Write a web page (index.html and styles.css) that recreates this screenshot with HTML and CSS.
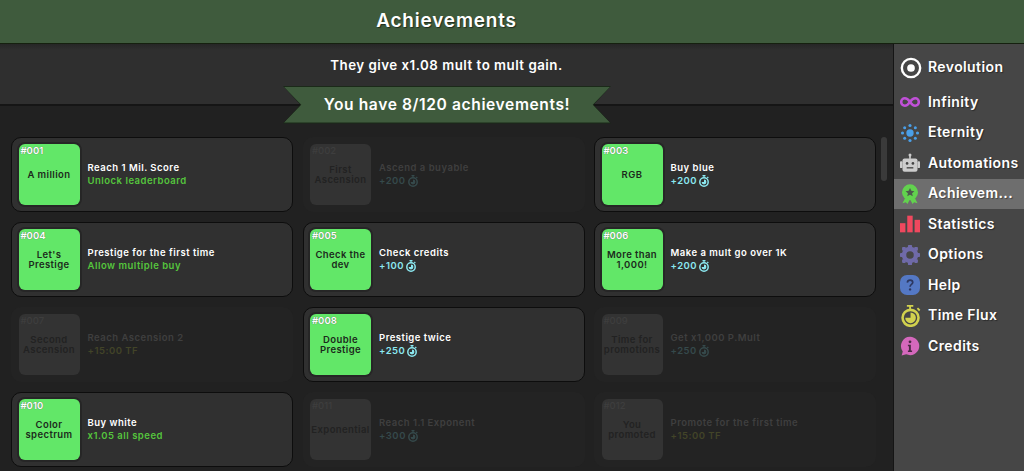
FILE: index.html
```html
<!DOCTYPE html>
<html lang="en">
<head>
<meta charset="utf-8">
<title>Achievements</title>
<link rel="stylesheet" href="styles.css">
</head>
<body>
<svg class="defs" width="0" height="0" aria-hidden="true">
  <symbol id="flux" viewBox="0 0 12 12">
    <path d="M4.500 .7h3M6 .7v2M9.300 2l1 1" fill="none" stroke="currentColor" stroke-width="1.200"/>
    <circle cx="6" cy="7" r="4.200" fill="none" stroke="currentColor" stroke-width="1.500"/>
    <path d="M6 7V4.600A2.400 2.400 0 1 1 3.600 7z" fill="currentColor"/>
  </symbol>
</svg>
<header class="topbar"><h1>Achievements</h1></header>
<div class="layout">
  <main class="main">
    <div class="info">They give x1.08 mult to mult gain.</div>
    <div class="ribbon"><span class="ribbon-fill">You have 8/120 achievements!</span></div>
    <div class="list">
      <div class="scroll"></div>
      <section class="grid">
        <article class="card"><div class="badge"><span class="num">#001</span>A million</div><div class="desc"><p>Reach 1 Mil. Score</p><p class="green">Unlock leaderboard</p></div></article>
        <article class="card locked"><div class="badge"><span class="num">#002</span>First Ascension</div><div class="desc"><p>Ascend a buyable</p><p class="cyan">+200<svg class="fx"><use href="#flux"/></svg></p></div></article>
        <article class="card"><div class="badge"><span class="num">#003</span>RGB</div><div class="desc"><p>Buy blue</p><p class="cyan">+200<svg class="fx"><use href="#flux"/></svg></p></div></article>
        <article class="card"><div class="badge"><span class="num">#004</span>Let's Prestige</div><div class="desc"><p>Prestige for the first time</p><p class="green">Allow multiple buy</p></div></article>
        <article class="card"><div class="badge"><span class="num">#005</span>Check the dev</div><div class="desc"><p>Check credits</p><p class="cyan">+100<svg class="fx"><use href="#flux"/></svg></p></div></article>
        <article class="card"><div class="badge"><span class="num">#006</span>More than 1,000!</div><div class="desc"><p>Make a mult go over 1K</p><p class="cyan">+200<svg class="fx"><use href="#flux"/></svg></p></div></article>
        <article class="card locked"><div class="badge"><span class="num">#007</span>Second Ascension</div><div class="desc"><p>Reach Ascension 2</p><p class="yellow">+15:00 TF</p></div></article>
        <article class="card"><div class="badge"><span class="num">#008</span>Double Prestige</div><div class="desc"><p>Prestige twice</p><p class="cyan">+250<svg class="fx"><use href="#flux"/></svg></p></div></article>
        <article class="card locked"><div class="badge"><span class="num">#009</span>Time for promotions</div><div class="desc"><p>Get x1,000 P.Mult</p><p class="cyan">+250<svg class="fx"><use href="#flux"/></svg></p></div></article>
        <article class="card"><div class="badge"><span class="num">#010</span>Color spectrum</div><div class="desc"><p>Buy white</p><p class="green">x1.05 all speed</p></div></article>
        <article class="card locked"><div class="badge"><span class="num">#011</span>Exponential</div><div class="desc"><p>Reach 1.1 Exponent</p><p class="cyan">+300<svg class="fx"><use href="#flux"/></svg></p></div></article>
        <article class="card locked"><div class="badge"><span class="num">#012</span>You promoted</div><div class="desc"><p>Promote for the first time</p><p class="yellow">+15:00 TF</p></div></article>
      </section>
    </div>
  </main>
  <nav class="side">
    <a class="item first"><svg class="ico big" viewBox="0 0 24 24"><circle cx="12" cy="12" r="10" fill="none" stroke="#fff" stroke-width="2.600"/><circle cx="12" cy="12" r="4.200" fill="#fff"/></svg><span>Revolution</span></a>
    <a class="item"><svg class="ico" viewBox="0 0 24 24"><path d="M12 12C9.500 8.500 7.800 7.600 5.800 7.600a4.400 4.400 0 0 0 0 8.800c2 0 3.700-.9 6.200-4.400s4.200-4.400 6.200-4.400a4.400 4.400 0 0 1 0 8.800c-2 0-3.700-.9-6.200-4.400z" fill="none" stroke="#c050d8" stroke-width="3"/></svg><span>Infinity</span></a>
    <a class="item"><svg class="ico" viewBox="0 0 24 24" fill="#4a9fe8"><circle cx="12" cy="12" r="4.400"/><circle cx="12" cy="3" r="1.900"/><circle cx="12" cy="21" r="1.900"/><circle cx="3" cy="12" r="1.900"/><circle cx="21" cy="12" r="1.900"/><circle cx="5.600" cy="5.600" r="1.800"/><circle cx="18.400" cy="5.600" r="1.800"/><circle cx="5.600" cy="18.400" r="1.800"/><circle cx="18.400" cy="18.400" r="1.800"/></svg><span>Eternity</span></a>
    <a class="item"><svg class="ico" viewBox="0 0 24 24"><circle cx="12" cy="2.500" r="1.800" fill="#ccc"/><rect x="11" y="3" width="2" height="4" fill="#ccc"/><rect x="0" y="10" width="3" height="8" rx="1" fill="#ccc"/><rect x="21" y="10" width="3" height="8" rx="1" fill="#ccc"/><rect x="3" y="6.500" width="18" height="16" rx="2.500" fill="#ccc"/><circle cx="8.500" cy="12.500" r="1.600" fill="#444"/><circle cx="15.500" cy="12.500" r="1.600" fill="#444"/><rect x="8" y="17" width="8" height="1.600" fill="#444"/></svg><span>Automations</span></a>
    <a class="item active"><svg class="ico" viewBox="0 0 24 24"><path d="M6 17l-3 6 4-1 2 2 3-6zM18 17l3 6-4-1-2 2-3-6z" fill="#62d24e"/><circle cx="12" cy="10" r="9.600" fill="#62d24e"/><path d="M12 4.800l1.600 3.400 3.700.4-2.800 2.500.8 3.700-3.300-1.900-3.300 1.900.8-3.700-2.800-2.500 3.700-.4z" fill="#4c5a4c"/></svg><span>Achievem...</span></a>
    <a class="item"><svg class="ico" viewBox="0 0 24 24" fill="#f0485e"><rect x="0" y="11" width="6.500" height="11"/><rect x="8.700" y="2" width="6.500" height="20"/><rect x="17.500" y="7" width="6.500" height="15"/></svg><span>Statistics</span></a>
    <a class="item"><svg class="ico" viewBox="0 0 24 24"><circle cx="12" cy="12" r="7.200" fill="none" stroke="#6f6aa8" stroke-width="5.400"/><g fill="#6f6aa8"><rect x="9.500" y="0" width="5" height="4" rx="1"/><rect x="9.500" y="20" width="5" height="4" rx="1"/><rect x="0" y="9.500" width="4" height="5" rx="1"/><rect x="20" y="9.500" width="4" height="5" rx="1"/><rect x="2.500" y="2.500" width="4.500" height="4.500" rx="1"/><rect x="17" y="2.500" width="4.500" height="4.500" rx="1"/><rect x="2.500" y="17" width="4.500" height="4.500" rx="1"/><rect x="17" y="17" width="4.500" height="4.500" rx="1"/></g></svg><span>Options</span></a>
    <a class="item"><svg class="ico" viewBox="0 0 24 24"><rect x="0" y="0" width="24" height="24" rx="8.500" fill="#5478c4"/><path d="M8.800 9.200c.2-2 1.600-3 3.300-3s3.200 1 3.200 2.800c0 2.300-3.200 2.400-3.200 5" fill="none" stroke="#2c3760" stroke-width="2"/><circle cx="12.100" cy="17.300" r="1.400" fill="#2c3760"/></svg><span>Help</span></a>
    <a class="item"><svg class="ico big" viewBox="0 0 24 24"><path d="M7.500 1h7M11 1v4M19 3.500l2.500 2.500" fill="none" stroke="#d2d24e" stroke-width="2"/><circle cx="11.500" cy="14" r="8.700" fill="none" stroke="#d2d24e" stroke-width="2.800"/><path d="M11.500 14V8.200a5.800 5.800 0 1 1-5.800 5.800z" fill="#d2d24e"/></svg><span>Time Flux</span></a>
    <a class="item"><svg class="ico" viewBox="0 0 24 24"><path d="M12 1a11 11 0 1 1-4.500 21L2 23.500l1.300-5A11 11 0 0 1 12 1z" fill="#d468bc"/><circle cx="12" cy="7" r="1.700" fill="#4a2a44"/><path d="M9.500 10.500h3.500v7h1.500v1.800h-5v-1.800h1.200v-5.200h-1.200z" fill="#4a2a44"/></svg><span>Credits</span></a>
  </nav>
</div>
</body>
</html>
```
FILE: styles.css
```css
* { box-sizing: border-box; margin: 0; padding: 0; }
html, body { height: 100%; overflow: hidden; }
body {
  display: flex;
  flex-direction: column;
  background: #212121;
  color: #fff;
  font-family: "Inter", "DejaVu Sans", sans-serif;
}
.defs { position: absolute; }
.topbar {
  flex: none;
  height: 44px;
  background: #3f5b3d;
  border-bottom: 1px solid #15200f;
  display: flex;
  align-items: center;
  justify-content: center;
  padding-right: 131px;
}
.topbar h1 { font-size: 19px; font-weight: 600; letter-spacing: .8px; margin-top: -2px; text-shadow: 1px 1px 1px rgba(0,0,0,.5); }
.layout { flex: 1; display: flex; min-height: 0; }
.main { flex: 1; min-width: 0; position: relative; display: flex; flex-direction: column; }
.info {
  flex: none;
  height: 62px;
  background: linear-gradient(#262626 0, #2f2f2f 6px);
  border-bottom: 2px solid #151515;
  text-align: center;
  padding-top: 13px;
  font-size: 13.300px;
  font-weight: 600;
  letter-spacing: .5px;
}
.ribbon {
  position: absolute;
  left: 283px;
  top: 42px;
  width: 328px;
  height: 37.500px;
  background: #1b2a19;
  clip-path: polygon(0 0, 100% 0, 94.700% 50%, 100% 100%, 0 100%, 5.300% 50%);
  padding: 1px;
}
.ribbon-fill {
  display: flex;
  align-items: center;
  justify-content: center;
  height: 100%;
  padding-bottom: 1px;
  background: #3f5b3d;
  clip-path: polygon(0 0, 100% 0, 94.700% 50%, 100% 100%, 0 100%, 5.300% 50%);
  font-size: 15.600px;
  font-weight: 600;
  letter-spacing: .6px;
}
.list { flex: 1; min-height: 0; display: flex; flex-direction: row-reverse; padding: 31px 6px 0 11px; gap: 5px; overflow: hidden; }
.scroll { flex: none; width: 6px; height: 44px; background: #3a3a3a; border-radius: 3px; }
.grid { flex: 1; min-width: 0; display: grid; grid-template-columns: repeat(3, 282px); grid-auto-rows: 75px; column-gap: 9.500px; row-gap: 10px; align-content: start; }
.card {
  display: flex;
  align-items: center;
  gap: 8px;
  padding: 0 6.500px;
  background: #303030;
  border: 1.500px solid #0d0d0d;
  border-radius: 10px;
  font-size: 9.500px;
  font-weight: 600;
  letter-spacing: .5px;
}
.badge {
  position: relative;
  flex: none;
  width: 61px;
  height: 61px;
  display: flex;
  align-items: center;
  justify-content: center;
  text-align: center;
  padding: 0 1px;
  line-height: 10px;
  letter-spacing: .4px;
  background: #62e768;
  box-shadow: 0 0 0 2px #262626;
  border-radius: 6px;
  color: #1c2a1c;
}
.num { position: absolute; left: 2px; top: 1px; font-size: 9.500px; font-weight: 600; letter-spacing: 0; color: #fff; line-height: 12px; text-shadow: 0 0 1px #555; }
.desc { display: flex; flex-direction: column; gap: 2px; line-height: 11px; margin-top: -1px; }
.green { color: #55c53d; }
.cyan { color: #8be8f0; display: flex; align-items: center; }
.yellow { color: #d0d060; }
.fx { width: 12px; height: 12px; margin: -.5px 0 -.5px 1px; }
.locked { border-color: transparent; background: #232323; color: #3f3f3f; }
.locked .badge { background: #333; box-shadow: none; color: #222; }
.locked .num { color: #3e3e3e; font-weight: 500; text-shadow: none; }
.locked .green { color: #36452f; }
.locked .cyan { color: #35494b; }
.locked .yellow { color: #424428; }
.side {
  flex: none;
  width: 131px;
  background: #464646;
  border-left: 1px solid #151515;
  padding-top: 8px;
  display: flex;
  flex-direction: column;
}
.item {
  display: flex;
  align-items: center;
  gap: 8px;
  height: 30.500px;
  padding-left: 6px;
  font-size: 14px;
  font-weight: 600;
  letter-spacing: .4px;
  white-space: nowrap;
  text-shadow: 1px 1px 1px rgba(0,0,0,.4);
}
.item span { margin-top: -2px; }
.item.first { height: 31px; margin-bottom: 4px; }
.item.active { background: #6e6e6e; }
.ico { flex: none; width: 20px; height: 20px; }
.ico.big { width: 22px; height: 22px; margin-right: -2px; }
```
